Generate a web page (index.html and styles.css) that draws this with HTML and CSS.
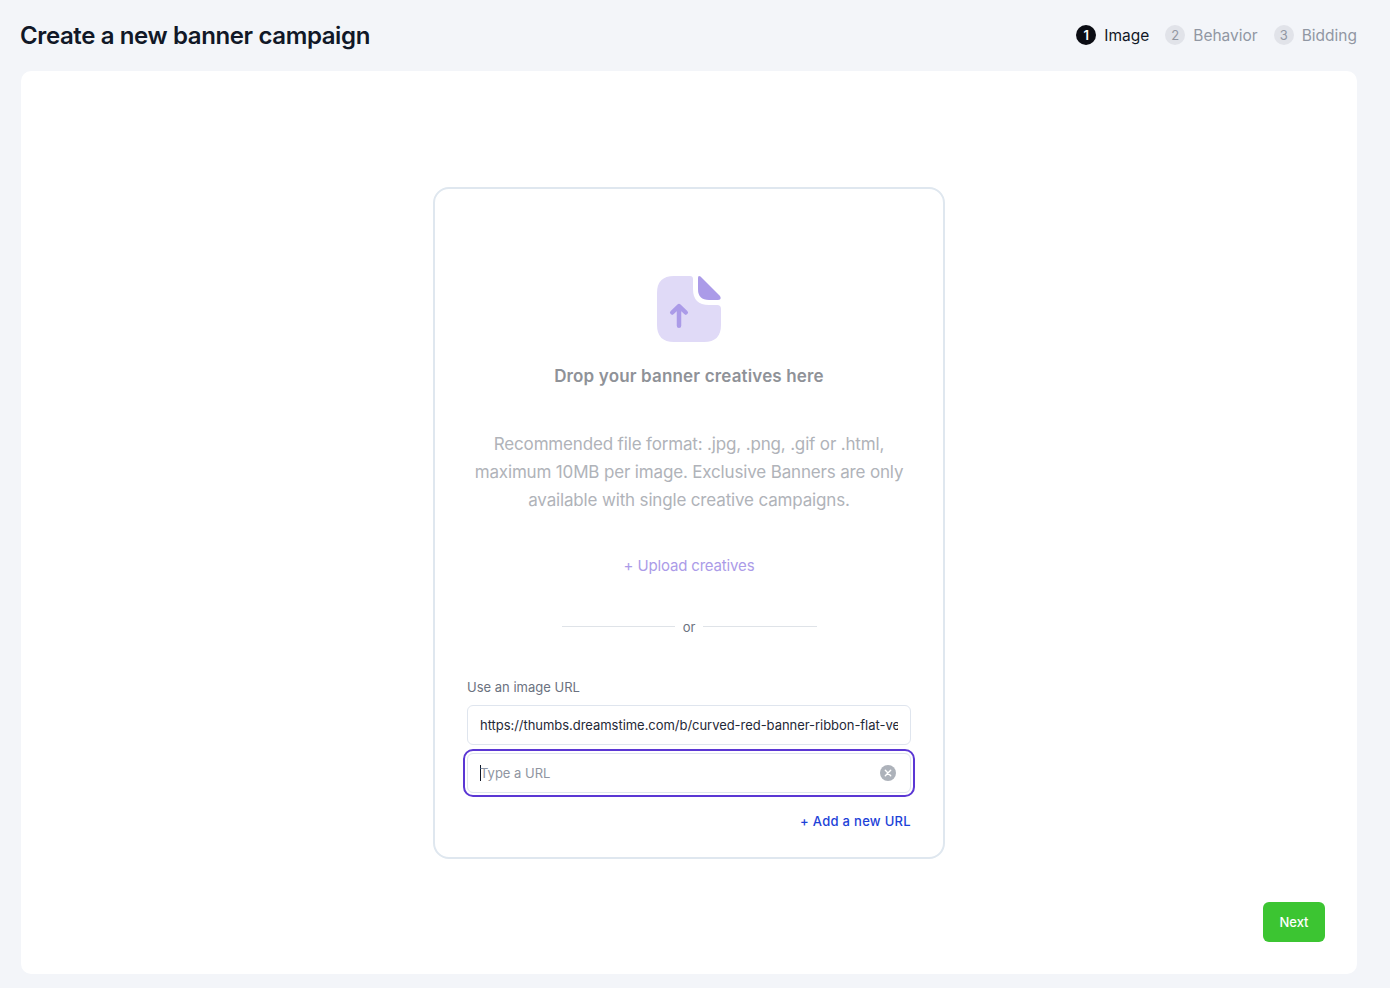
FILE: index.html
```html
<!DOCTYPE html>
<html lang="en">
<head>
<meta charset="utf-8">
<title>Create a new banner campaign</title>
<link rel="stylesheet" href="styles.css">
</head>
<body>
<div class="page">
  <header class="top">
    <h1 class="title">Create a new banner campaign</h1>
    <ol class="steps">
      <li class="step active"><span class="num">1</span><span>Image</span></li>
      <li class="step"><span class="num">2</span><span>Behavior</span></li>
      <li class="step"><span class="num">3</span><span>Bidding</span></li>
    </ol>
  </header>
  <main class="card">
    <section class="drop">
      <svg class="file" width="64" height="68" viewBox="0 0 64 68">
        <path fill="#e0daf7" d="M17 1H33Q36 1 36 4V14Q36 30 52 30H60Q64 30 64 34V50Q64 67 47 67H17Q0 67 0 50V18Q0 1 17 1Z"/>
        <path fill="#ab9be8" d="M41 3Q41 0 43.500 1.500L63 21Q65 25 61 25H52Q41 25 41 14Z"/>
        <path fill="none" stroke="#ab9be8" stroke-width="4.500" stroke-linecap="round" stroke-linejoin="round" d="M22 50.750V32M15.250 37.500L22 31L28.750 37.500"/>
      </svg>
      <h2 class="drop-title">Drop your banner creatives here</h2>
      <p class="drop-text">Recommended file format: .jpg, .png, .gif or .html,<br>maximum 10MB per image. Exclusive Banners are only<br>available with single creative campaigns.</p>
      <a class="upload">+ Upload creatives</a>
      <div class="or"><span class="rule"></span><span>or</span><span class="rule"></span></div>
      <div class="url-block">
        <label class="url-label">Use an image URL</label>
        <div class="field"><span class="value">https://thumbs.dreamstime.com/b/curved-red-banner-ribbon-flat-vector-illustration</span></div>
        <div class="focus-ring">
          <div class="field inner"><span class="caret"></span><span class="placeholder">Type a URL</span>
            <svg class="clear" width="16" height="16" viewBox="0 0 16 16"><circle cx="8" cy="8" r="8" fill="#adb2ba"/><path d="M5.300 5.300L10.700 10.700M10.700 5.300L5.300 10.700" stroke="#fff" stroke-width="1.400" stroke-linecap="round"/></svg>
          </div>
        </div>
        <a class="add">+ Add a new URL</a>
      </div>
    </section>
    <div class="actions"><button class="next">Next</button></div>
  </main>
</div>
</body>
</html>
```
FILE: styles.css
```css
* { box-sizing: border-box; }
html, body { margin: 0; height: 100%; }
body { background: #f3f5f9; font-family: "Inter", "Liberation Sans", sans-serif; color: #111827; overflow: hidden; }
.page { padding: 0 33px 14px 21px; height: 988px; display: flex; flex-direction: column; }
.top { height: 71px; flex: none; display: flex; align-items: center; justify-content: space-between; }
.title { margin: 0 0 0 -1px; font-size: 24px; font-weight: 600; color: #111827; letter-spacing: -0.38px; }
.steps { list-style: none; margin: 0; padding: 0 0 1px; display: flex; gap: 16px; }
.step { display: flex; align-items: center; gap: 8px; font-size: 15.500px; color: #9197a3; }
.step.active { color: #111827; }
.num { width: 20px; height: 20px; border-radius: 50%; background: #e1e3e9; color: #9197a3; font-size: 13px; display: flex; align-items: center; justify-content: center; }
.active .num { background: #0b0d14; color: #fff; font-weight: 600; }
.card { flex: 1; background: #fff; border-radius: 10px; display: flex; flex-direction: column; align-items: center; padding-top: 116px; position: relative; }
.drop { width: 512px; height: 672px; border: 2px solid #dfe7ef; border-radius: 16px; display: flex; flex-direction: column; align-items: center; padding: 86px 32px 0; }
.file { flex: none; display: block; }
.drop-title { margin: 21px 0 0; font-size: 17px; line-height: 24px; font-weight: 600; color: #8f9298; letter-spacing: 0.16px; }
.drop-text { margin: 42px 0 0; font-size: 17px; line-height: 28px; text-align: center; color: #b0b3b9; white-space: nowrap; letter-spacing: -0.16px; }
.upload { margin-top: 40px; font-size: 15px; line-height: 24px; color: #ab9be8; letter-spacing: -0.16px; }
.or { margin-top: 37px; width: 255px; display: flex; align-items: center; gap: 8px; font-size: 13px; line-height: 24px; color: #6b7280; }
.rule { flex: 1; height: 1px; background: #dfe3e8; margin-bottom: 2px; }
.url-block { margin-top: 36px; width: 100%; display: flex; flex-direction: column; }
.url-label { font-size: 13px; line-height: 24px; color: #6b7280; }
.field { margin-top: 6px; height: 40px; border: 1px solid #dfe5ee; border-radius: 6px; padding: 0 12px; display: flex; align-items: center; font-size: 13px; background: #fff; overflow: hidden; position: relative; }
.value { white-space: nowrap; overflow: hidden; color: #1f2937; letter-spacing: -0.04px; }
.focus-ring { margin: 4px -4px 0; border: 2px solid #5b37d4; border-radius: 10px; padding: 2px; }
.inner { margin: 0; }
.caret { width: 1px; height: 16px; background: #111827; margin-right: -1px; }
.placeholder { color: #8f95a1; flex: 1; }
.clear { flex: none; margin-right: 2px; }
.add { margin-top: 12px; align-self: flex-end; font-size: 13px; line-height: 24px; font-weight: 500; color: #1d42d8; letter-spacing: 0.3px; }
.actions { align-self: stretch; display: flex; justify-content: flex-end; padding: 43px 32px 0; }
.next { width: 62px; height: 40px; border: 0; border-radius: 6px; background: #3cc532; color: #fff; font: 500 13px "Inter", "Liberation Sans", sans-serif; }
```
